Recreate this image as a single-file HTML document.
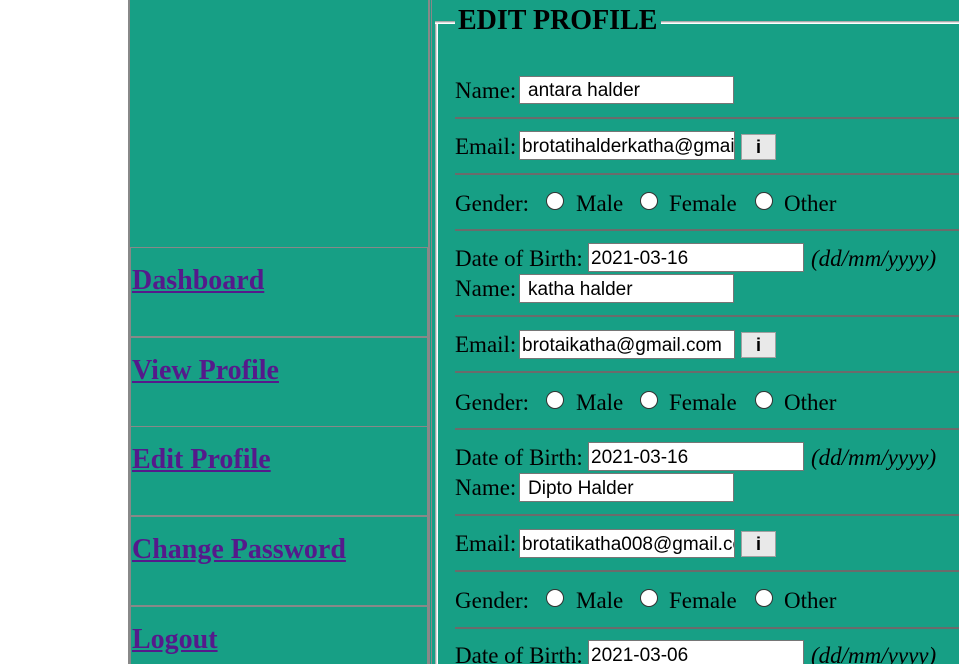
<!DOCTYPE html>
<html><head><style>
html,body{margin:0;width:959px;height:664px;overflow:hidden;}
body{background:#fff;position:relative;font-family:"Liberation Serif",serif;}
.a{position:absolute;}
.t{position:absolute;font-size:23px;line-height:26px;color:#000;white-space:nowrap;}
.in{position:absolute;background:#fff;border:1px solid #767676;box-sizing:border-box;font-family:"Liberation Sans",sans-serif;font-size:19px;line-height:29px;padding-left:2px;white-space:nowrap;overflow:hidden;color:#000;}
.btn{position:absolute;background:#e9e9e9;border:1px solid #a0a0a0;box-sizing:border-box;font-family:"Liberation Sans",sans-serif;font-weight:bold;font-size:18px;text-align:center;line-height:24px;}
.hr{position:absolute;left:455px;width:504px;height:0;border-top:2px solid #6b6b6b;}
.r{position:absolute;width:18px;height:18px;border-radius:50%;background:#fff;border:1px solid #333;box-sizing:border-box;}
.nav{position:absolute;left:130px;width:298px;height:90px;border:1px solid #888;box-sizing:border-box;}
.nav a{position:absolute;left:1px;top:18px;font-size:28px;font-weight:bold;color:#551a8b;text-decoration:underline;line-height:30px;white-space:nowrap;}
i{font-style:italic}
</style></head><body>
<div class="a" style="left:128px;top:0;width:831px;height:664px;background:#179f85;"></div>
<div class="a" style="left:128px;top:0;width:2px;height:664px;background:#888;"></div>
<div class="a" style="left:428px;top:0;width:2px;height:664px;background:#888;"></div>
<div class="a" style="left:431px;top:0;width:1px;height:664px;background:#888;"></div>
<div class="nav" style="top:247px"><a>Dashboard</a></div>
<div class="nav" style="top:337px"><a>View Profile</a></div>
<div class="nav" style="top:426px"><a>Edit Profile</a></div>
<div class="nav" style="top:516px"><a>Change Password</a></div>
<div class="nav" style="top:606px;height:58px;border-bottom:none"><a>Logout</a></div>
<div class="a" style="left:435px;top:21px;width:3px;height:643px;border-left:1px solid #aaa;border-right:1px solid #fff;box-sizing:border-box;background:#ddd;"></div>
<div class="a" style="left:435px;top:21px;width:20px;height:3px;border-top:1px solid #aaa;border-bottom:1px solid #fff;box-sizing:border-box;background:#ddd;"></div>
<div class="a" style="left:661px;top:21px;width:298px;height:3px;border-top:1px solid #aaa;border-bottom:1px solid #fff;box-sizing:border-box;background:#ddd;"></div>
<div class="a" style="left:458px;top:5px;font-size:28px;font-weight:bold;line-height:32px;white-space:nowrap">EDIT PROFILE</div>

<div class="t" style="left:455px;top:78px">Name:</div>
<div class="in" style="left:519px;top:76px;width:215px;height:28px;padding-left:8px;line-height:28px">antara halder</div>
<div class="hr" style="top:117px"></div>
<div class="t" style="left:455px;top:134px">Email:</div>
<div class="in" style="left:519px;top:131px;width:216px;height:29px">brotatihalderkatha@gmail.com</div>
<div class="btn" style="left:741px;top:134px;width:35px;height:26px">i</div>
<div class="hr" style="top:173px"></div>
<div class="t" style="left:455px;top:191px">Gender:</div>
<div class="r" style="left:546px;top:192px"></div><div class="t" style="left:576px;top:191px">Male</div>
<div class="r" style="left:640px;top:192px"></div><div class="t" style="left:669px;top:191px">Female</div>
<div class="r" style="left:755px;top:192px"></div><div class="t" style="left:784px;top:191px">Other</div>
<div class="hr" style="top:229px"></div>
<div class="t" style="left:455px;top:246px">Date of Birth:</div>
<div class="in" style="left:588px;top:243px;width:216px;height:29px">2021-03-16</div>
<div class="t" style="left:811px;top:246px"><i>(dd/mm/yyyy)</i></div>

<div class="t" style="left:455px;top:276px">Name:</div>
<div class="in" style="left:519px;top:274px;width:215px;height:29px;padding-left:8px">katha halder</div>
<div class="hr" style="top:315px"></div>
<div class="t" style="left:455px;top:332px">Email:</div>
<div class="in" style="left:519px;top:330px;width:216px;height:29px">brotaikatha@gmail.com</div>
<div class="btn" style="left:741px;top:332px;width:35px;height:26px">i</div>
<div class="hr" style="top:371px"></div>
<div class="t" style="left:455px;top:390px">Gender:</div>
<div class="r" style="left:546px;top:391px"></div><div class="t" style="left:576px;top:390px">Male</div>
<div class="r" style="left:640px;top:391px"></div><div class="t" style="left:669px;top:390px">Female</div>
<div class="r" style="left:755px;top:391px"></div><div class="t" style="left:784px;top:390px">Other</div>
<div class="hr" style="top:428px"></div>
<div class="t" style="left:455px;top:445px">Date of Birth:</div>
<div class="in" style="left:588px;top:442px;width:216px;height:29px">2021-03-16</div>
<div class="t" style="left:811px;top:445px"><i>(dd/mm/yyyy)</i></div>

<div class="t" style="left:455px;top:475px">Name:</div>
<div class="in" style="left:519px;top:473px;width:215px;height:29px;padding-left:8px">Dipto Halder</div>
<div class="hr" style="top:514px"></div>
<div class="t" style="left:455px;top:531px">Email:</div>
<div class="in" style="left:519px;top:529px;width:216px;height:29px">brotatikatha008@gmail.com</div>
<div class="btn" style="left:741px;top:531px;width:35px;height:26px">i</div>
<div class="hr" style="top:570px"></div>
<div class="t" style="left:455px;top:588px">Gender:</div>
<div class="r" style="left:546px;top:589px"></div><div class="t" style="left:576px;top:588px">Male</div>
<div class="r" style="left:640px;top:589px"></div><div class="t" style="left:669px;top:588px">Female</div>
<div class="r" style="left:755px;top:589px"></div><div class="t" style="left:784px;top:588px">Other</div>
<div class="hr" style="top:627px"></div>
<div class="t" style="left:455px;top:643px">Date of Birth:</div>
<div class="in" style="left:588px;top:640px;width:216px;height:29px">2021-03-06</div>
<div class="t" style="left:811px;top:643px"><i>(dd/mm/yyyy)</i></div>
</body></html>
